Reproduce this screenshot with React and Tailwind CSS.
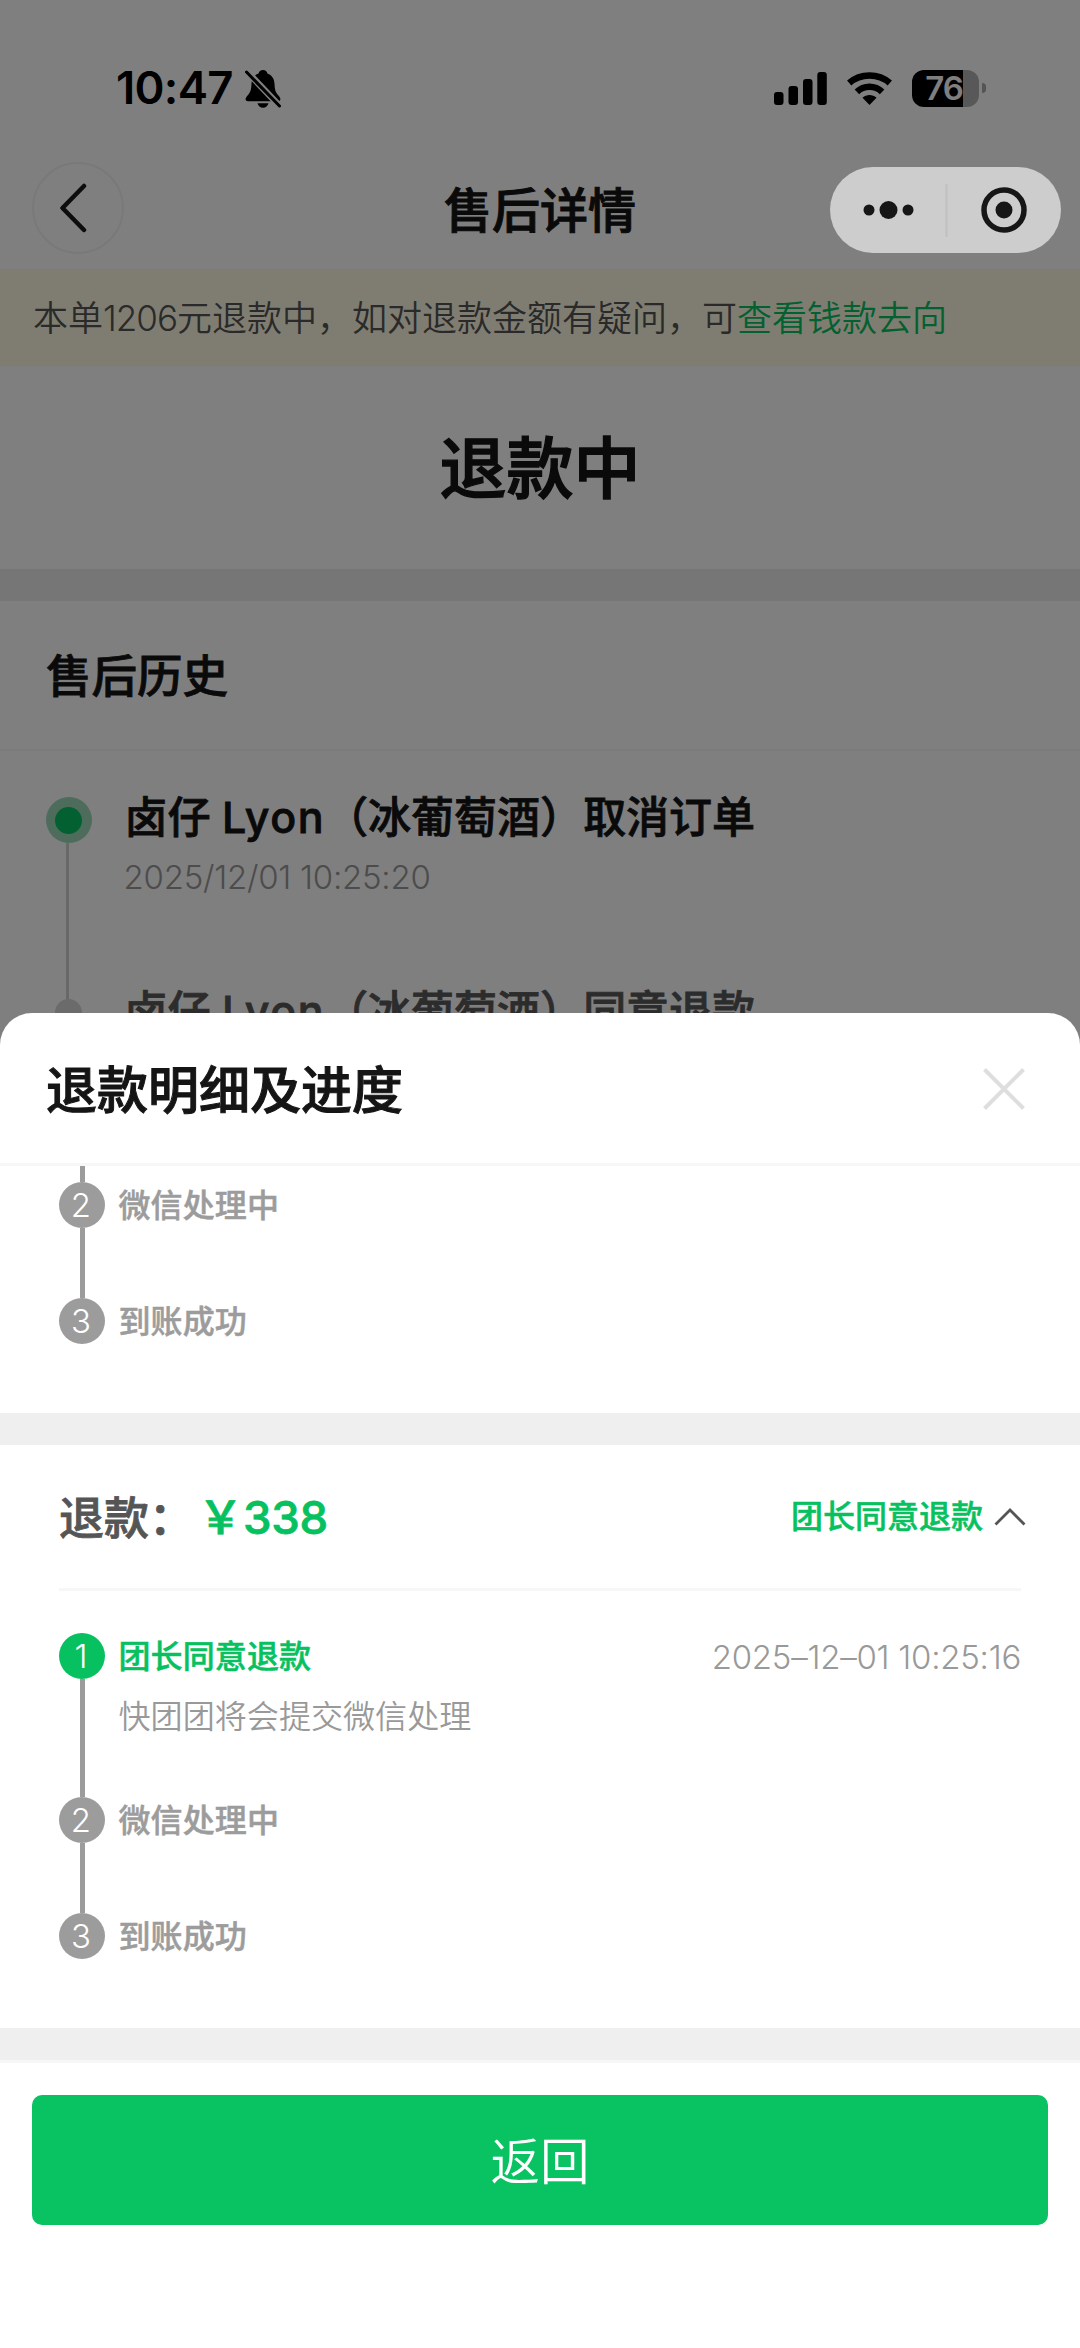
const steps = [
  { title: "团长同意退款", desc: "快团团将会提交微信处理", time: "2025–12–01 10:25:16", active: true },
  { title: "微信处理中" },
  { title: "到账成功" },
];

function StatusBar() {
  return (
    <div className="flex h-[140px] items-center justify-between pt-[36px] pr-[94px] pl-[116px]">
      <div className="flex items-center">
        <span className="w-[129px] text-[45.5px] leading-none font-semibold tracking-[-0.7px] whitespace-nowrap">10:47</span>
        <svg className="h-[39px] w-[36px]" viewBox="0 0 36 39">
          <path
            d="M18 1c-2.500 0-4 1.600-4.400 3.400C9 6 6.700 10 6.500 14.500c-.2 6-1 8.500-3.500 11.500-1.700 2-2.400 3-2.400 4.300 0 1.300 1 2 2.400 2h30c1.400 0 2.400-.7 2.400-2 0-1.300-.7-2.300-2.400-4.300-2.500-3-3.300-5.500-3.500-11.500C29.300 10 27 6 22.400 4.400 22 2.600 20.500 1 18 1z"
            fill="#000"
          />
          <path d="M12.500 34.200h11c-.7 2.700-2.800 4.500-5.500 4.500s-4.800-1.800-5.500-4.500z" fill="#000" />
          <path d="M0 0.500L36 38.500" stroke="#fff" strokeWidth="6.500" />
          <path d="M1.500 3L34.500 37" stroke="#000" strokeWidth="3" strokeLinecap="round" />
        </svg>
      </div>
      <div className="flex items-center">
        <svg className="mr-[20px] h-[33px] w-[53px]" viewBox="0 0 53 33">
          <rect x="0" y="20" width="9.500" height="13" rx="3" />
          <rect x="14.500" y="14" width="9.500" height="19" rx="3" />
          <rect x="29" y="7" width="9.500" height="26" rx="3" />
          <rect x="43.300" y="0" width="9.500" height="33" rx="3" />
        </svg>
        <svg className="mr-[20px] h-[33px] w-[45px]" viewBox="0 0 45 33">
          <path d="M22.500 33l-7-7.200c3.800-3.600 10.200-3.600 14 0z" />
          <path d="M9.900 19.800c7-6.800 18.200-6.800 25.200 0" fill="none" stroke="#000" strokeWidth="6.500" />
          <path d="M2.200 11c11.300-10 29.300-10 40.600 0" fill="none" stroke="#000" strokeWidth="6.500" />
        </svg>
        <div className="flex h-[37px] w-[67px] items-center justify-center rounded-[12px] bg-[linear-gradient(to_right,#000_51px,#b0b0b0_51px)] pr-[3px] text-[33px] leading-none font-semibold tracking-[-1px] text-white">
          76
        </div>
        <div className="ml-[3px] h-[10px] w-[4px] rounded-r-full bg-[#a8a8a8]" />
      </div>
    </div>
  );
}

function NavBar() {
  return (
    <div className="relative flex h-[129px] items-center justify-center pt-[12px]">
      <div className="absolute top-[22px] left-[32px] flex size-[92px] items-center justify-center rounded-full border-2 border-[#f3f3f3]">
        <svg className="mr-[11px] h-[50px] w-[28px]" viewBox="0 0 28 50" fill="none" stroke="#1a1a1a" strokeWidth="4.500" strokeLinecap="round" strokeLinejoin="round">
          <path d="M25 3L3.500 25 25 47" />
        </svg>
      </div>
      <h1 className="text-[48px] leading-none font-medium text-[#151515] [-webkit-text-stroke:1px_#151515]">售后详情</h1>
    </div>
  );
}

function Capsule() {
  return (
    <div className="absolute top-[167px] right-[19px] z-20 flex h-[86px] w-[231px] items-center rounded-full bg-[#cdcdcd]">
      <svg className="h-[86px] w-[231px]" viewBox="0 0 231 86" fill="#161616">
        <circle cx="39" cy="43" r="5.500" />
        <circle cx="58.500" cy="43" r="9" />
        <circle cx="78" cy="43" r="5.500" />
        <rect x="115.500" y="17" width="2" height="53" fill="#c0c0c0" />
        <circle cx="174" cy="43" r="20" fill="none" stroke="#161616" strokeWidth="5.500" />
        <circle cx="174" cy="43" r="8.500" />
      </svg>
    </div>
  );
}

function HistoryRow({ action, time, active }) {
  return (
    <div className="flex h-[194px]">
      <div className="flex w-[46px] flex-col items-center">
        {active ? (
          <div className="flex size-[46px] shrink-0 items-center justify-center rounded-full bg-[#9cd8b8]">
            <div className="size-[27px] rounded-full bg-[#07c160]" />
          </div>
        ) : (
          <div className="mt-[8px] size-[27px] rounded-full bg-[#d6d6d6]" />
        )}
        {active && <div className="mr-[3px] -mb-[10px] w-[3px] grow bg-[#d0d0d0]" />}
      </div>
      <div className="ml-[33px]">
        <p
          className={`h-[46px] text-[43px] leading-[41px] font-medium whitespace-nowrap ${
            active ? "text-[#151515] [-webkit-text-stroke:0.8px_#151515]" : "text-[#585858] [-webkit-text-stroke:0.8px_#585858]"
          }`}
        >
          卤仔 <span className="tracking-[1.5px]">Lyon</span>（冰葡萄酒）{action}
        </p>
        {time && <p className="mt-[18px] -ml-px text-[33px] leading-[32px] font-light tracking-[-0.25px] text-[#999]">{time}</p>}
      </div>
    </div>
  );
}

function Step({ index, step, last }) {
  return (
    <div className="flex">
      <div className="flex w-[46px] flex-col items-center">
        <div className={`flex size-[46px] shrink-0 items-center justify-center rounded-full pr-[2px] text-[33px] leading-none font-[350] text-white ${step.active ? "bg-[#07c160]" : "bg-[#9c9c9c]"}`}>
          {index}
        </div>
        {!last && <div className={`w-[5px] bg-[#9c9c9c] ${step.desc ? "h-[118px]" : "h-[70px]"}`} />}
      </div>
      <div className="ml-[13.5px] grow">
        <div className="flex h-[46px] items-center justify-between text-[32px] leading-none">
          <span
            className={`pt-[2px] font-medium tracking-[0.1px] ${
              step.active ? "text-[#07c160] [-webkit-text-stroke:0.5px_#07c160]" : "text-[#9c9c9c] [-webkit-text-stroke:0.5px_#9c9c9c]"
            }`}
          >
            {step.title}
          </span>
          {step.time && <span className="pt-[2px] text-[33px] font-light tracking-[-0.25px] text-[#999]">{step.time}</span>}
        </div>
        {step.desc && <p className="mt-[22px] text-[32.1px] leading-[32px] font-[350] text-[#999]">{step.desc}</p>}
      </div>
    </div>
  );
}

function RefundSheet() {
  return (
    <section className="absolute inset-x-0 top-[1013px] bottom-0 z-20 flex flex-col overflow-hidden rounded-t-[32px] bg-white">
      <header className="flex h-[153px] shrink-0 items-center justify-between border-b-[3px] border-[#f7f7f7] pr-[55px] pl-[46px]">
        <h2 className="pt-[4px] text-[51px] leading-none font-medium text-[#151515] [-webkit-text-stroke:1px_#151515]">退款明细及进度</h2>
        <svg className="mt-[2px] size-[42px]" viewBox="0 0 42 42" stroke="#dedede" strokeWidth="4">
          <path d="M1.500 1.500l39 39M40.500 1.500l-39 39" />
        </svg>
      </header>

      {/* tail of the previous refund, scrolled under the header */}
      <div className="h-[247px] shrink-0 px-[59px]">
        <div className="ml-[21px] h-[16px] w-[5px] bg-[#9c9c9c]" />
        <Step index={2} step={steps[1]} />
        <Step index={3} step={steps[2]} last />
      </div>
      <div className="h-[32px] shrink-0 bg-[#efefef]" />

      <div className="h-[583px] shrink-0 px-[59px]">
        <div className="flex h-[146px] items-center justify-between border-b-[3px] border-[#f7f7f7]">
          <div className="flex items-center pt-[3px] text-[45px] leading-none font-medium">
            <span className="text-[#555] [-webkit-text-stroke:0.8px_#555]">退款：</span>
            <span className="ml-[4px] text-[#07c160] [-webkit-text-stroke:0.8px_#07c160]">
              ￥<span className="text-[45.5px] tracking-[-0.3px]">338</span>
            </span>
          </div>
          <div className="-mr-[5px] flex items-center">
            <span className="text-[32px] leading-none font-medium text-[#07c160] [-webkit-text-stroke:0.5px_#07c160]">团长同意退款</span>
            <svg className="ml-[11px] h-[20px] w-[32px]" viewBox="0 0 32 20" fill="none" stroke="#555" strokeWidth="2.800">
              <path d="M1.500 17.500L16 3l14.500 14.500" />
            </svg>
          </div>
        </div>
        <div className="pt-[42px]">
          {steps.map((step, i) => (
            <Step key={step.title} index={i + 1} step={step} last={i === steps.length - 1} />
          ))}
        </div>
      </div>
      <div className="h-[35px] shrink-0 border-b-[3px] border-[#f7f7f7] bg-[#efefef]" />

      <div className="px-[32px] pt-[32px]">
        <button className="flex h-[130px] w-full items-center justify-center rounded-[10px] bg-[#09c261] pt-[5px] text-[49.5px] leading-none font-[350] text-white">
          返回
        </button>
      </div>
    </section>
  );
}

export default function App() {
  return (
    <div className="relative h-[2348px] w-[1080px] overflow-hidden bg-white font-[Inter,'Noto_Sans_CJK_SC',sans-serif] text-black">
      <StatusBar />
      <NavBar />
      <div className="flex h-[97px] items-center bg-[#fffae2] pt-[2px] pl-[33px] text-[35px] leading-none font-[350] whitespace-nowrap text-[#555]">
        本单<span className="tracking-[-1px]">1206</span>元退款中，如对退款金额有疑问，可
        <span className="text-[#07c160]">查看钱款去向</span>
      </div>
      <div className="flex h-[203px] items-center justify-center pt-[2px] text-[67px] leading-none font-medium text-[#151515] [-webkit-text-stroke:1.4px_#151515]">退款中</div>
      <div className="h-[32px] bg-[#ededed]" />
      <h2 className="flex h-[150px] items-center border-b-2 border-[#f6f6f6] pt-[3px] pl-[46px] text-[45.5px] leading-none font-medium text-[#151515] [-webkit-text-stroke:0.8px_#151515]">售后历史</h2>
      <div className="pt-[46px] pl-[45.5px]">
        <HistoryRow action="取消订单" time="2025/12/01 10:25:20" active />
        <HistoryRow action="同意退款" />
      </div>

      <div className="absolute inset-0 z-10 bg-black/50" />
      <Capsule />
      <RefundSheet />
    </div>
  );
}
